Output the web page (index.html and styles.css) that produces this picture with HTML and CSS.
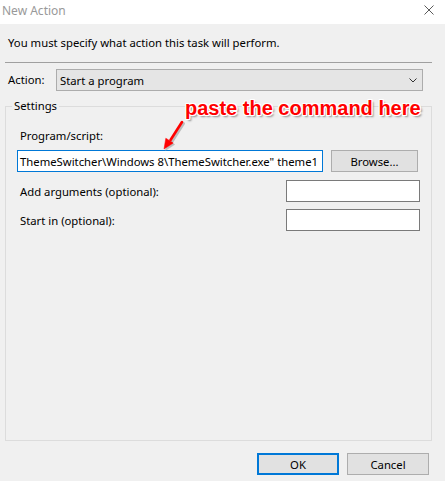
FILE: index.html
```html
<!DOCTYPE html>
<html>
<head>
<meta charset="utf-8">
<link rel="stylesheet" href="styles.css">
</head>
<body>
<div class="window">
  <div class="titlebar">
    <span class="title">New Action</span>
    <svg class="close" width="10" height="10" viewBox="0 0 10 10"><path d="M0.5 0.5L9.5 9.5M9.5 0.5L0.5 9.5" stroke="#5a5a5a" stroke-width="1" fill="none"/></svg>
  </div>
  <div class="content">
    <div class="intro">You must specify what action this task will perform.</div>
    <div class="separator"></div>
    <div class="action-row">
      <span class="action-label">Action:</span>
      <div class="select">
        <span>Start a program</span>
        <svg width="8" height="5" viewBox="0 0 8 5"><path d="M0.5 0.5L4 4L7.5 0.5" stroke="#333" stroke-width="1" fill="none"/></svg>
      </div>
    </div>
    <fieldset class="group">
      <legend>Settings</legend>
      <div class="field-label">Program/script:</div>
      <div class="program-row">
        <div class="textbox focused"><span>ThemeSwitcher\Windows 8\ThemeSwitcher.exe" theme1</span></div>
        <div class="button browse">Browse...</div>
      </div>
      <div class="opt-row first">
        <span class="opt-label">Add arguments (optional):</span>
        <div class="textbox small"></div>
      </div>
      <div class="opt-row">
        <span class="opt-label">Start in (optional):</span>
        <div class="textbox small"></div>
      </div>
    </fieldset>
    <div class="footer">
      <div class="button ok">OK</div>
      <div class="button">Cancel</div>
    </div>
  </div>
  <div class="annotation">paste the command here</div>
  <svg class="arrow" width="30" height="36" viewBox="160 118 30 36">
    <g transform="translate(1.5,1.5)" fill="#9a9a9a" stroke="#9a9a9a" opacity="0.6">
      <path d="M182 122L170.5 140" stroke-width="3" stroke-linecap="round"/>
      <path d="M164 149L165.8 138.2L173.2 143Z" stroke-width="0.5"/>
    </g>
    <g fill="#f00" stroke="#f00">
      <path d="M182 122L170.5 140" stroke-width="2.6" stroke-linecap="round"/>
      <path d="M164 149L165.8 138.2L173.2 143Z" stroke-width="0.5"/>
    </g>
  </svg>
</div>
</body>
</html>
```

FILE: styles.css
```css
* { box-sizing: border-box; }
html, body { margin: 0; padding: 0; }
body {
  background: #f0f0f0;
  font-family: "Noto Sans", "Open Sans", sans-serif;
  font-size: 11.3px;
  color: #000;
}
.window {
  position: relative;
  height: 481px;
  display: flex;
  flex-direction: column;
}
.titlebar {
  height: 24px;
  background: #fff;
  display: flex;
  align-items: center;
  justify-content: space-between;
  padding: 0 11px 0 2px;
  flex: none;
}
.title {
  color: #999;
  font-size: 12px;
  line-height: 16px;
  margin-top: -2px;
}
.close { margin-top: -4px; }
.content {
  flex: 1;
  display: flex;
  flex-direction: column;
  padding: 0 13px 0 5px;
}
.intro {
  padding: 11px 0 0 3px;
  line-height: 16px;
}
.separator {
  margin-top: 11px;
  height: 1px;
  background: #a0a0a0;
}
.action-row {
  margin-top: 6px;
  display: flex;
  align-items: center;
  padding-left: 3px;
}
.action-label { width: 48px; line-height: 16px; }
.select {
  width: 367px;
  height: 22px;
  background: #e5e5e5;
  border: 1px solid #acacac;
  display: flex;
  align-items: center;
  justify-content: space-between;
  padding: 0 5px 0 3px;
}
.group {
  flex: 1;
  margin: 7px 0 0 0;
  border: 1px solid #dcdcdc;
  padding: 0 12px 0 11px;
  min-width: 0;
}
.group legend {
  padding: 0 2px;
  margin-left: -5px;
  line-height: 16px;
}
.field-label {
  margin-top: 14px;
  padding-left: 3px;
  line-height: 16px;
}
.program-row {
  margin-top: 6px;
  display: flex;
  gap: 8px;
}
.textbox {
  height: 22px;
  background: #fff;
  border: 1px solid #7a7a7a;
}
.textbox.focused {
  width: 306px;
  border-color: #0078d7;
  display: flex;
  align-items: center;
  overflow: hidden;
  white-space: nowrap;
  padding-left: 2px;
}
.button {
  height: 22px;
  width: 82px;
  background: #e1e1e1;
  border: 1px solid #adadad;
  display: flex;
  align-items: center;
  justify-content: center;
}
.browse { width: 87px; }
.opt-row {
  margin-top: 7px;
  display: flex;
  align-items: center;
  justify-content: space-between;
  padding-left: 3px;
}
.opt-row.first { margin-top: 8px; }
.opt-row .textbox.small { width: 134px; margin-right: -1px; }
.footer {
  display: flex;
  justify-content: flex-end;
  gap: 8px;
  padding: 12px 3px 6px 0;
}
.ok { border: 2px solid #0078d7; }
.annotation {
  position: absolute;
  left: 185px;
  top: 96px;
  color: #f00;
  font-family: "Liberation Sans", Arial, sans-serif;
  font-weight: bold;
  font-size: 20px;
  line-height: 24px;
  white-space: nowrap;
  text-shadow:
    1px 0 0 #fff, -1px 0 0 #fff, 0 1px 0 #fff, 0 -1px 0 #fff,
    1px 1px 0 #fff, -1px -1px 0 #fff, 1px -1px 0 #fff, -1px 1px 0 #fff,
    2px 2px 2px #8a8a8a;
}
.arrow {
  position: absolute;
  left: 160px;
  top: 118px;
}
```
